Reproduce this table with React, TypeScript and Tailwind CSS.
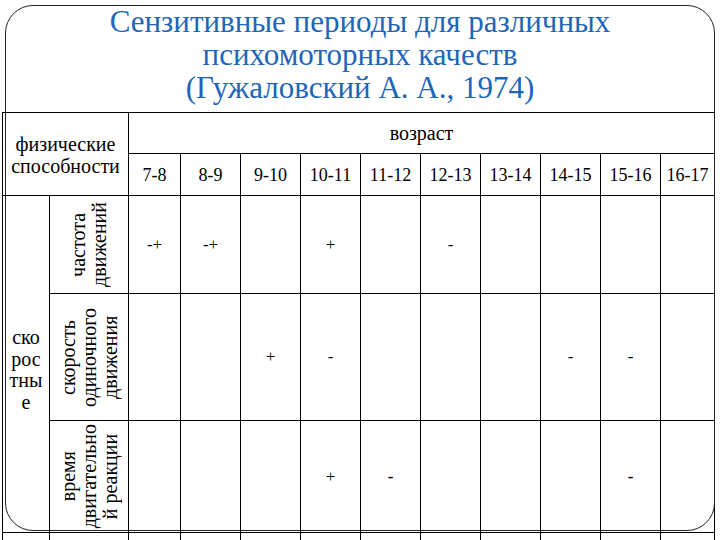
const ages = ['7-8', '8-9', '9-10', '10-11', '11-12', '12-13', '13-14', '14-15', '15-16', '16-17'];

const colWidths = ['w-[47px]', 'w-[79px]', 'w-[52px]', 'w-[60px]', 'w-[60px]', 'w-[60px]', 'w-[60px]', 'w-[60px]', 'w-[60px]', 'w-[60px]', 'w-[60px]', 'w-[54px]'];

type Mark = { text: string; bold?: boolean } | null;

const rows: { label: string[]; height: string; inner: string; marks: Mark[] }[] = [
  {
    label: ['частота', 'движений'],
    height: 'h-[98px]',
    inner: 'h-[97px]',
    marks: [{ text: '-+' }, { text: '-+' }, null, { text: '+' }, null, { text: '-' }, null, null, null, null],
  },
  {
    label: ['скорость', 'одиночного', 'движения'],
    height: 'h-[127px]',
    inner: 'h-[126px]',
    marks: [null, null, { text: '+' }, { text: '-' }, null, null, null, { text: '-' }, { text: '-' }, null],
  },
  {
    label: ['время', 'двигательно', 'й реакции'],
    height: 'h-[112px]',
    inner: 'h-[111px]',
    marks: [null, null, null, { text: '+' }, { text: '-', bold: true }, null, null, null, { text: '-', bold: true }, null],
  },
];

const VerticalLabel = ({ lines, inner }: { lines: string[]; inner: string }) => (
  <div className={`flex ${inner} items-center justify-center overflow-hidden`}>
    <span className="inline-block rotate-180 text-center text-[20px] leading-[21px] [writing-mode:vertical-rl]">
      {lines.map((line, i) => (
        <span key={i}>
          {line}
          {i < lines.length - 1 && <br />}
        </span>
      ))}
    </span>
  </div>
);

export default function App() {
  return (
    <div className="relative h-[540px] w-[720px] overflow-hidden bg-white text-black [font-family:Liberation_Serif,serif]">
      <header className="pt-[5px] text-center text-[31px] leading-[33px] text-[#1d66b8]">
        <div>Сензитивные периоды для различных</div>
        <div>психомоторных качеств</div>
        <div>(Гужаловский А. А., 1974)</div>
      </header>

      <table className="mt-[8px] ml-[2px] w-[712px] table-fixed border-collapse text-[20px]">
        <colgroup>
          {colWidths.map((w, i) => (
            <col key={i} className={w} />
          ))}
        </colgroup>
        <tbody>
          <tr className="h-[41px]">
            <td colSpan={2} rowSpan={2} className="border border-black pt-[2px] text-center align-middle leading-[22px]">
              физические
              <br />
              способности
            </td>
            <td colSpan={10} className="border border-black text-center align-middle">
              возраст
            </td>
          </tr>
          <tr className="h-[42px]">
            {ages.map((a) => (
              <td key={a} className="border border-black pt-[2px] text-center align-middle text-[18px]">
                {a}
              </td>
            ))}
          </tr>
          {rows.map((row, r) => (
            <tr key={r} className={row.height}>
              {r === 0 && (
                <td rowSpan={3} className="border border-black pt-[12px] text-center align-middle leading-[21.5px]">
                  ско
                  <br />
                  рос
                  <br />
                  тны
                  <br />е
                </td>
              )}
              <td className="border border-black p-0">
                <VerticalLabel lines={row.label} inner={row.inner} />
              </td>
              {row.marks.map((m, i) => (
                <td
                  key={i}
                  className={`border border-black text-center align-middle text-[17px] ${m?.bold ? 'font-bold' : ''}`}
                >
                  {m?.text ?? ''}
                </td>
              ))}
            </tr>
          ))}
          <tr className="h-[30px]">
            {colWidths.map((_, i) => (
              <td key={i} className="border border-black" />
            ))}
          </tr>
        </tbody>
      </table>

      <div className="pointer-events-none absolute left-[5px] top-[5px] h-[526px] w-[710px] rounded-[28px] border border-[#222]" />
    </div>
  );
}
